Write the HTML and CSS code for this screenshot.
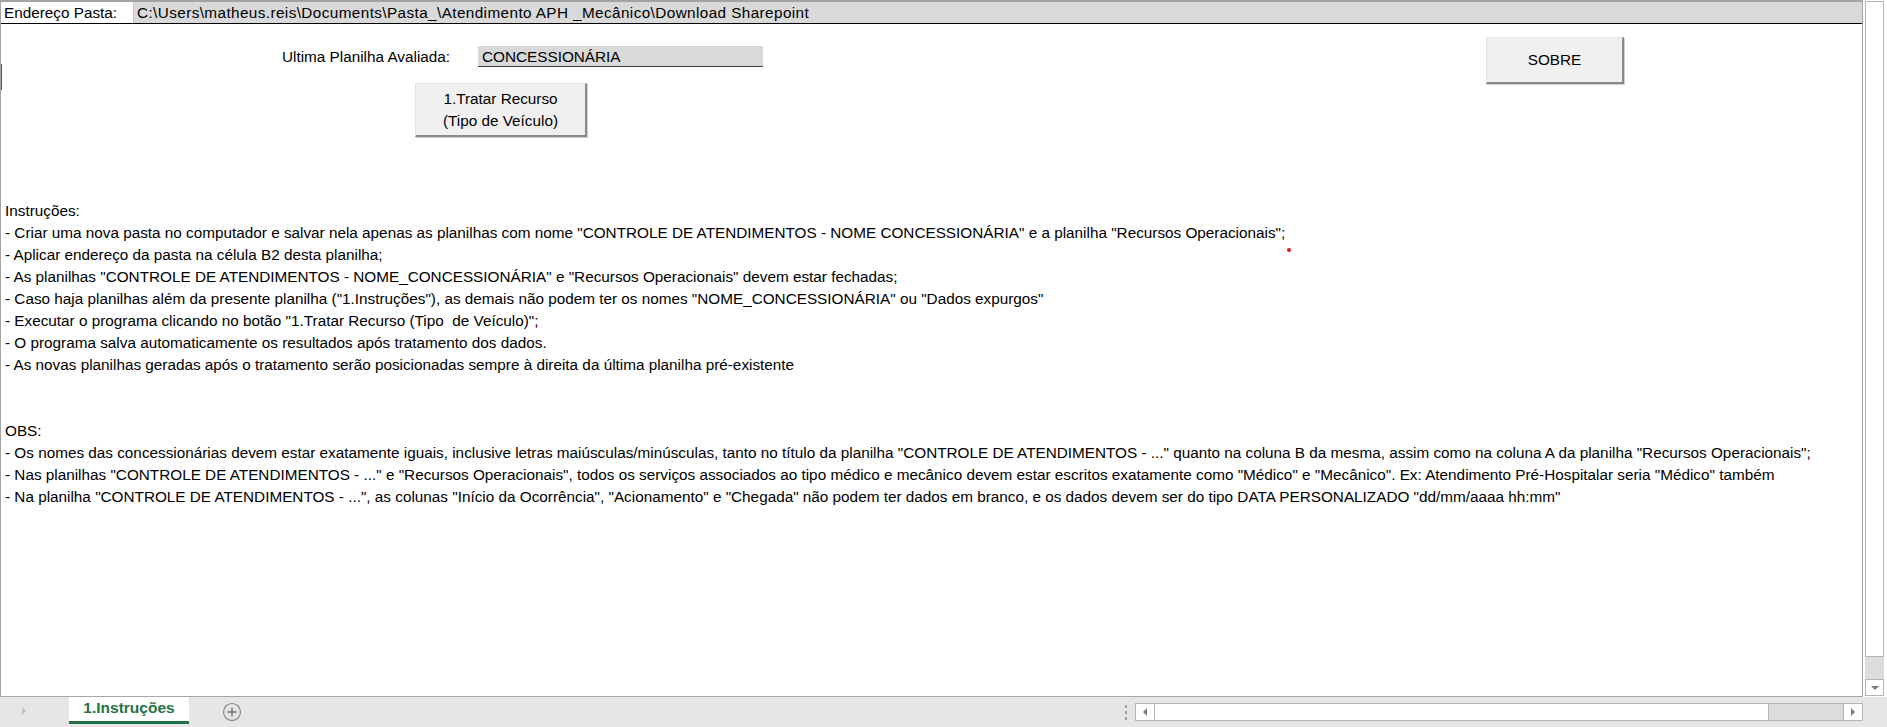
FILE: index.html
```html
<!DOCTYPE html>
<html lang="pt-BR">
<head>
<meta charset="utf-8">
<title>1.Instruções</title>
<link rel="stylesheet" href="styles.css">
</head>
<body>
<div class="app">
  <div class="main">
    <div class="sheet">
      <div class="addr-row">
        <div class="cell-a">Endereço Pasta:</div>
        <div class="cell-b">C:\Users\matheus.reis\Documents\Pasta_\Atendimento APH _Mecânico\Download Sharepoint</div>
      </div>
      <div class="top">
        <div class="eval-row">
          <span class="eval-label">Ultima Planilha Avaliada:</span>
          <span class="eval-field">CONCESSIONÁRIA</span>
        </div>
        <div class="btn btn-tratar">1.Tratar Recurso<br>(Tipo de Veículo)</div>
        <div class="btn btn-sobre">SOBRE</div>
      </div>
      <div class="notes">
        <div class="line">Instruções:</div>
        <div class="line">- Criar uma nova pasta no computador e salvar nela apenas as planilhas com nome "CONTROLE DE ATENDIMENTOS - NOME CONCESSIONÁRIA" e a planilha "Recursos Operacionais";</div>
        <div class="line">- Aplicar endereço da pasta na célula B2 desta planilha;</div>
        <div class="line">- As planilhas "CONTROLE DE ATENDIMENTOS - NOME_CONCESSIONÁRIA" e "Recursos Operacionais" devem estar fechadas;</div>
        <div class="line">- Caso haja planilhas além da presente planilha ("1.Instruções"), as demais não podem ter os nomes "NOME_CONCESSIONÁRIA" ou "Dados expurgos"</div>
        <div class="line">- Executar o programa clicando no botão "1.Tratar Recurso (Tipo  de Veículo)";</div>
        <div class="line">- O programa salva automaticamente os resultados após tratamento dos dados.</div>
        <div class="line">- As novas planilhas geradas após o tratamento serão posicionadas sempre à direita da última planilha pré-existente</div>
        <div class="line"> </div>
        <div class="line"> </div>
        <div class="line">OBS:</div>
        <div class="line">- Os nomes das concessionárias devem estar exatamente iguais, inclusive letras maiúsculas/minúsculas, tanto no título da planilha "CONTROLE DE ATENDIMENTOS - ..." quanto na coluna B da mesma, assim como na coluna A da planilha "Recursos Operacionais";</div>
        <div class="line">- Nas planilhas "CONTROLE DE ATENDIMENTOS - ..." e "Recursos Operacionais", todos os serviços associados ao tipo médico e mecânico devem estar escritos exatamente como "Médico" e "Mecânico". Ex: Atendimento Pré-Hospitalar seria "Médico" também</div>
        <div class="line">- Na planilha "CONTROLE DE ATENDIMENTOS - ...", as colunas "Início da Ocorrência", "Acionamento" e "Chegada" não podem ter dados em branco, e os dados devem ser do tipo DATA PERSONALIZADO "dd/mm/aaaa hh:mm"</div>
      </div>
      <span class="comment-dot"></span>
      <span class="row-marker"></span>
    </div>
    <div class="vscroll">
      <div class="vthumb"></div>
      <div class="vtrack"></div>
      <div class="varrow">
        <svg width="10" height="6" viewBox="0 0 10 6"><path d="M1 1 L9 1 L5 5 Z" fill="#7a7a7a"/></svg>
      </div>
    </div>
  </div>
  <div class="tabbar">
    <div class="nav">
      <svg width="8" height="10" viewBox="0 0 8 10"><path d="M2 1 L6 5 L2 9 Z" fill="#c3c3c3"/></svg>
    </div>
    <div class="tab">1.Instruções</div>
    <div class="add">
      <svg width="20" height="20" viewBox="0 0 20 20"><circle cx="10" cy="10" r="8.5" fill="none" stroke="#8a8a8a" stroke-width="1.2"/><path d="M10 5.5 V14.5 M5.5 10 H14.5" stroke="#6e6e6e" stroke-width="1.3"/></svg>
    </div>
    <div class="spacer"></div>
    <div class="dots"><i></i><i></i><i></i></div>
    <div class="hscroll">
      <div class="harrow">
        <svg width="6" height="10" viewBox="0 0 6 10"><path d="M5 1 L1 5 L5 9 Z" fill="#7a7a7a"/></svg>
      </div>
      <div class="hthumb"></div>
      <div class="htrack"></div>
      <div class="harrow">
        <svg width="6" height="10" viewBox="0 0 6 10"><path d="M1 1 L5 5 L1 9 Z" fill="#7a7a7a"/></svg>
      </div>
    </div>
  </div>
</div>
</body>
</html>
```

FILE: styles.css
```css
* { box-sizing: border-box; }
html, body {
  margin: 0;
  padding: 0;
  width: 1887px;
  height: 727px;
  overflow: hidden;
  background: #ffffff;
  font-family: "Liberation Sans", Arial, sans-serif;
  color: #000;
}
.app {
  display: grid;
  grid-template-rows: 697px 30px;
  width: 1887px;
  height: 727px;
}
.main {
  display: flex;
  background: #ffffff;
}
.sheet {
  position: relative;
  width: 1863px;
  height: 697px;
  border-left: 1px solid #a6a6a6;
  border-right: 1px solid #a6a6a6;
  border-bottom: 1px solid #a6a6a6;
  overflow: hidden;
  font-size: 15.3px;
}
.addr-row {
  display: flex;
  height: 24px;
  border-top: 2px solid #a3a3a3;
  border-bottom: 1px solid #000;
  line-height: 21px;
}
.cell-a {
  width: 133px;
  padding-left: 3px;
  background: #ffffff;
  border-right: 1px solid #c8c8c8;
}
.cell-b {
  flex: 1;
  padding-left: 3px;
  background: #d9d9d9;
  white-space: pre;
  letter-spacing: 0.4px;
}
.top {
  position: relative;
  height: 174px;
}
.eval-row {
  display: flex;
  align-items: center;
  padding-left: 281px;
  padding-top: 22px;
}
.eval-label {
  width: 196px;
  line-height: 21px;
}
.eval-field {
  width: 285px;
  height: 21px;
  line-height: 21px;
  padding-left: 4px;
  background: #d9d9d9;
  border-bottom: 1px solid #404040;
}
.btn {
  position: absolute;
  display: flex;
  align-items: center;
  justify-content: center;
  text-align: center;
  background: #f0f0f0;
  border-top: 1px solid #e3e3e3;
  border-left: 1px solid #e3e3e3;
  border-right: 2px solid #8a8a8a;
  border-bottom: 2px solid #8a8a8a;
  box-shadow: 1px 1px 0 #d0d0d0;
  line-height: 22px;
}
.btn-tratar {
  left: 414px;
  top: 59px;
  width: 172px;
  height: 54px;
}
.btn-sobre {
  left: 1485px;
  top: 13px;
  width: 138px;
  height: 47px;
}
.notes {
  padding-left: 4px;
  padding-top: 2px;
  line-height: 22px;
}
.line {
  height: 22px;
  white-space: pre;
}
.comment-dot {
  position: absolute;
  left: 1286px;
  top: 248px;
  width: 4px;
  height: 4px;
  border-radius: 50%;
  background: #e0191b;
}
.row-marker {
  position: absolute;
  left: -1px;
  top: 64px;
  width: 2px;
  height: 26px;
  background: #217346;
}
.vscroll {
  width: 24px;
  height: 697px;
  display: flex;
  flex-direction: column;
  padding: 1px 3px 0 2px;
  background: #ffffff;
}
.vthumb {
  height: 656px;
  background: #ffffff;
  border: 1px solid #b5b5b5;
}
.vtrack {
  height: 22px;
  background: #dcdcdc;
}
.varrow {
  height: 17px;
  background: #ffffff;
  border: 1px solid #b5b5b5;
  display: flex;
  align-items: center;
  justify-content: center;
}
.tabbar {
  display: flex;
  align-items: flex-start;
  background: #e6e6e6;
  height: 30px;
}
.nav {
  width: 69px;
  height: 28px;
  display: flex;
  align-items: center;
  padding-left: 20px;
}
.tab {
  width: 120px;
  height: 28px;
  background: #ffffff;
  border-bottom: 3px solid #217346;
  color: #217346;
  font-weight: bold;
  font-size: 15.5px;
  line-height: 24px;
  text-align: center;
  margin-top: -1px;
}
.add {
  width: 84px;
  height: 28px;
  display: flex;
  align-items: center;
  padding-left: 33px;
  padding-top: 1px;
}
.spacer {
  flex: 1;
}
.dots {
  width: 18px;
  height: 30px;
  display: flex;
  flex-direction: column;
  justify-content: center;
  align-items: center;
  gap: 3px;
}
.dots i {
  display: block;
  width: 2px;
  height: 3px;
  background: #a0a0a0;
}
.hscroll {
  width: 728px;
  height: 18px;
  margin-top: 6px;
  margin-right: 24px;
  display: flex;
  background: #ffffff;
  border: 1px solid #b5b5b5;
}
.harrow {
  width: 18px;
  display: flex;
  align-items: center;
  justify-content: center;
  background: #ffffff;
}
.hthumb {
  width: 615px;
  border-left: 1px solid #b5b5b5;
  border-right: 1px solid #b5b5b5;
  background: #ffffff;
}
.htrack {
  flex: 1;
  background: #dcdcdc;
  border-right: 1px solid #b5b5b5;
}
```
